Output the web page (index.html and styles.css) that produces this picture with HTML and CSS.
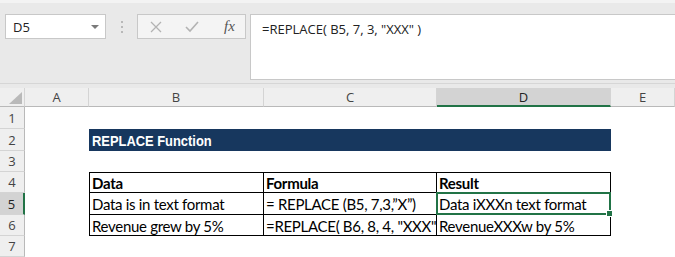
FILE: index.html
```html
<!DOCTYPE html>
<html>
    <head>
        <link rel="stylesheet" href="styles.css">
    </head>
    <body>
        <div class="formula-bar">
            <div class="name-box">
                <span>D5</span>
                <i class="drop"></i>
            </div>
            <div class="grip"><i></i><i></i><i></i></div>
            <div class="buttons">
                <svg width="14" height="14" viewBox="0 0 14 14"><path d="M2 2 L12 12 M12 2 L2 12" stroke="#b3b3b3" stroke-width="1.3" fill="none"/></svg>
                <svg width="16" height="14" viewBox="0 0 16 14"><path d="M2 7 L6 11 L14 2" stroke="#b3b3b3" stroke-width="1.6" fill="none"/></svg>
                <span class="fx">fx</span>
            </div>
            <div class="formula-input">=REPLACE( B5, 7, 3, "XXX" )</div>
        </div>

        <div class="sheet">
            <div class="hd corner"><i></i></div>
            <div class="hd col">A</div>
            <div class="hd col">B</div>
            <div class="hd col">C</div>
            <div class="hd col active">D</div>
            <div class="hd col">E</div>

            <div class="hd row">1</div>
            <div class="cell"></div><div class="cell"></div><div class="cell"></div><div class="cell"></div><div class="cell"></div>

            <div class="hd row">2</div>
            <div class="cell"></div>
            <div class="cell title"><span>REPLACE Function</span></div>
            <div class="cell"></div>

            <div class="hd row">3</div>
            <div class="cell"></div><div class="cell"></div><div class="cell"></div><div class="cell"></div><div class="cell"></div>

            <div class="hd row">4</div>
            <div class="cell"></div>
            <div class="cell t top first head">Data</div>
            <div class="cell t top head">Formula</div>
            <div class="cell t top head">Result</div>
            <div class="cell"></div>

            <div class="hd row active">5</div>
            <div class="cell"></div>
            <div class="cell t first">Data is in text format</div>
            <div class="cell t">= REPLACE (B5, 7,3,”X”)</div>
            <div class="cell t selected">Data iXXXn text format</div>
            <div class="cell"></div>

            <div class="hd row">6</div>
            <div class="cell"></div>
            <div class="cell t first">Revenue grew by 5%</div>
            <div class="cell t">=REPLACE( B6, 8, 4, "XXX" )</div>
            <div class="cell t">RevenueXXXw by 5%</div>
            <div class="cell"></div>

            <div class="hd row">7</div>
            <div class="cell"></div><div class="cell"></div><div class="cell"></div><div class="cell"></div><div class="cell"></div>

            <div class="hd row"></div>
            <div class="cell"></div><div class="cell"></div><div class="cell"></div><div class="cell"></div><div class="cell"></div>
        </div>
    </body>
</html>
```

FILE: styles.css
```css
body {
    margin: 0;
    width: 675px;
    height: 257px;
    overflow: hidden;
    background-color: white;
    font-family: "Open Sans", sans-serif;
}
.formula-bar {
    display: flex;
    align-items: flex-start;
    height: 84px;
    padding-top: 11px;
    padding-left: 5px;
    box-sizing: border-box;
    background-color: #e9e9e9;
    border-top: 3px solid #f3f3f3;
    border-bottom: 1px solid #d6d6d6;
}
.name-box {
    width: 101px;
    height: 25px;
    box-sizing: border-box;
    background-color: white;
    border: 1px solid #c8c8c8;
    display: flex;
    align-items: center;
    justify-content: space-between;
    padding: 0 6px 0 7px;
    font-size: 13px;
    color: #222;
}
.drop {
    width: 0;
    height: 0;
    border-left: 4px solid transparent;
    border-right: 4px solid transparent;
    border-top: 4px solid #7a7a7a;
}
.grip {
    width: 31px;
    height: 25px;
    display: flex;
    flex-direction: column;
    align-items: center;
    justify-content: center;
    gap: 3px;
}
.grip i {
    width: 2px;
    height: 2px;
    background-color: #b8b8b8;
}
.buttons {
    width: 109px;
    height: 25px;
    box-sizing: border-box;
    background-color: #f4f4f4;
    border: 1px solid #c8c8c8;
    display: flex;
    align-items: center;
    padding-left: 11px;
    gap: 21px;
}
.fx {
    font-family: "Liberation Serif", serif;
    font-style: italic;
    font-size: 15px;
    color: #555;
    margin-left: 3px;
}
.formula-input {
    flex: 1;
    height: 66px;
    margin-left: 4px;
    box-sizing: border-box;
    background-color: white;
    border: 1px solid #c8c8c8;
    border-right: none;
    padding: 5px 0 0 11px;
    font-size: 13px;
    color: #222;
}
.sheet {
    display: grid;
    grid-template-columns: 25px 64px 175px 173px 174px 1fr;
    grid-template-rows: 4px 19px 22px 22px 21px 21px 22px 21px 21px 1fr;
    height: 173px;
}
.sheet::before {
    content: "";
    grid-column: 1 / -1;
    background-color: #e9e9e9;
}
.hd {
    background-color: #efefef;
    color: #444;
    font-size: 13px;
    display: flex;
    align-items: center;
    justify-content: center;
    box-sizing: border-box;
}
.col {
    border-right: 1px solid #d4d4d4;
    border-bottom: 1px solid #b9b9b9;
}
.row {
    border-right: 1px solid #b9b9b9;
    border-bottom: 1px solid #d4d4d4;
}
.corner {
    border-right: 1px solid #d4d4d4;
    border-bottom: 1px solid #b9b9b9;
    align-items: flex-end;
    justify-content: flex-end;
    padding: 0 2px 2px 0;
}
.corner i {
    width: 0;
    height: 0;
    border-left: 13px solid transparent;
    border-bottom: 12px solid #b9b9b9;
}
.col.active {
    background-color: #d3d3d3;
    border-bottom: 2px solid #217346;
    color: #222;
}
.row.active {
    background-color: #d3d3d3;
    border-right: 2px solid #217346;
    color: #222;
}
.cell {
    box-sizing: border-box;
    font-family: "Lato", sans-serif;
    font-size: 15px;
    letter-spacing: -0.3px;
    color: black;
    white-space: nowrap;
    overflow: hidden;
}
.title {
    grid-column: span 3;
    background-color: #17375e;
    color: white;
    font-family: "Liberation Sans", sans-serif;
    font-weight: bold;
    font-size: 15px;
    letter-spacing: 0;
    display: flex;
    align-items: center;
    padding-left: 3px;
}
.title span {
    transform: scaleX(0.86);
    transform-origin: left center;
}
.t {
    border-right: 1px solid black;
    border-bottom: 1px solid black;
    display: flex;
    align-items: center;
    padding: 1px 0 0 2px;
}
.t.first {
    border-left: 1px solid black;
}
.t.top {
    border-top: 1px solid black;
}
.head {
    font-weight: bold;
}
.selected {
    position: relative;
    overflow: visible;
}
.selected::after {
    content: "";
    position: absolute;
    top: -1px;
    left: -1px;
    right: -1px;
    bottom: -1px;
    border: 2px solid #217346;
}
.selected::before {
    content: "";
    position: absolute;
    right: -3px;
    bottom: -3px;
    width: 5px;
    height: 5px;
    background-color: #217346;
    border: 1px solid white;
    z-index: 1;
}
```
